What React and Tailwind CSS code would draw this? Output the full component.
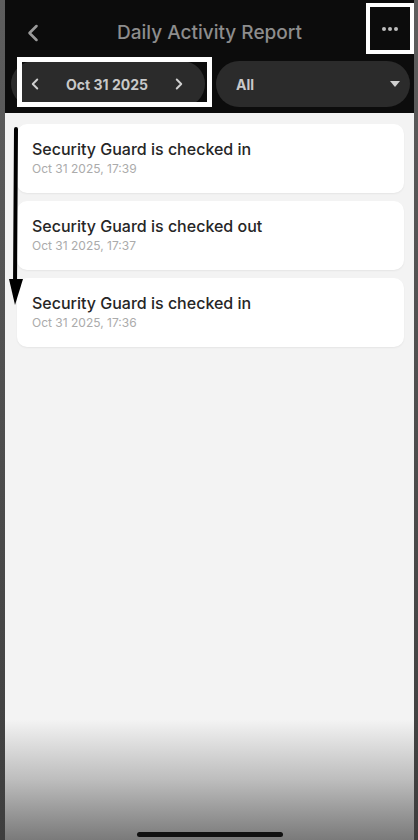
import { ChevronLeft, ChevronRight } from "lucide-react";

const activities = [
    { title: "Security Guard is checked in", time: "Oct 31 2025, 17:39" },
    { title: "Security Guard is checked out", time: "Oct 31 2025, 17:37" },
    { title: "Security Guard is checked in", time: "Oct 31 2025, 17:36" },
];

export default function App() {
    return (
        <div
            className="relative flex h-[840px] w-[418px] bg-gradient-to-b from-[#5e5e5e] to-[#3e3e3e]"
            style={{ fontFamily: "Inter, 'Noto Sans', sans-serif" }}
        >
            <div className="ml-[5px] mr-[4px] flex flex-1 flex-col bg-[#f3f3f3]">
                {/* header */}
                <div className="relative bg-[#0c0c0c]">
                    <div className="flex h-[58px] items-center px-[14px] pt-[8px]">
                        <ChevronLeft className="h-7 w-7 text-[#9a9a9a]" strokeWidth={2.2} />
                        <h1 className="flex-1 pr-[28px] text-center text-[19px] font-medium text-[#8d8d8d]">
                            Daily Activity Report
                        </h1>
                    </div>
                    {/* annotation box around the menu */}
                    <div className="absolute right-0 top-[3px] flex h-[51px] w-[48px] items-center justify-center border-[4px] border-white">
                        <div className="flex gap-[2px]">
                            <span className="h-[4px] w-[4px] rounded-full bg-[#bdbdbd]" />
                            <span className="h-[4px] w-[4px] rounded-full bg-[#bdbdbd]" />
                            <span className="h-[4px] w-[4px] rounded-full bg-[#bdbdbd]" />
                        </div>
                    </div>
                    <div className="flex gap-[11px] pb-[6px] pl-[6px] pr-[4px] pt-[3px]">
                        <div className="relative flex h-[46px] w-[194px] items-center justify-between rounded-full bg-[#2b2b2b] pl-[15px] pr-[17px]">
                            <ChevronLeft className="h-[18px] w-[18px] text-[#cfcfcf]" strokeWidth={2.6} />
                            <span className="text-[14px] font-bold text-[#c9c9c9]">
                                Oct 31 2025
                            </span>
                            <ChevronRight className="h-[18px] w-[18px] text-[#cfcfcf]" strokeWidth={2.6} />
                            <div className="absolute -top-[4px] left-[6px] h-[50px] w-[195px] border-[5px] border-white" />
                        </div>
                        <div className="flex h-[46px] flex-1 items-center justify-between rounded-full bg-[#2b2b2b] pl-[20px] pr-[10px]">
                            <span className="text-[14px] font-bold text-[#c9c9c9]">All</span>
                            <span className="h-0 w-0 border-x-[5px] border-t-[6px] border-x-transparent border-t-[#cfcfcf]" />
                        </div>
                    </div>
                </div>

                {/* list */}
                <div className="relative flex flex-1 flex-col gap-[8px] pl-[12px] pr-[10px] pt-[11px]">
                    {activities.map((item, index) => (
                        <div
                            key={index}
                            className="flex h-[69px] flex-col justify-center rounded-[10px] bg-white px-[15px] pb-[2px] shadow-[0_1px_2px_rgba(0,0,0,0.06)]"
                        >
                            <p className="text-[16px] font-medium leading-[20px] text-[#262626]">
                                {item.title}
                            </p>
                            <p className="mt-[3px] text-[12px] leading-[14px] text-[#ababab]">
                                {item.time}
                            </p>
                        </div>
                    ))}
                    <svg className="absolute left-[2px] top-[14px]" width="18" height="180" viewBox="0 0 18 180">
                        <path d="M9 2 L8 160" stroke="#000" strokeWidth="4" strokeLinecap="round" />
                        <path d="M2 152 L16 152 L8 178 Z" fill="#000" />
                    </svg>
                </div>

                {/* bottom fade */}
                <div className="flex h-[120px] items-end justify-center bg-gradient-to-b from-[#f3f3f3] via-[#bdbdbd] to-[#7a7a7a] pb-[3px]">
                    <div className="h-[5px] w-[146px] rounded-full bg-[#111]" />
                </div>
            </div>
        </div>
    );
}
